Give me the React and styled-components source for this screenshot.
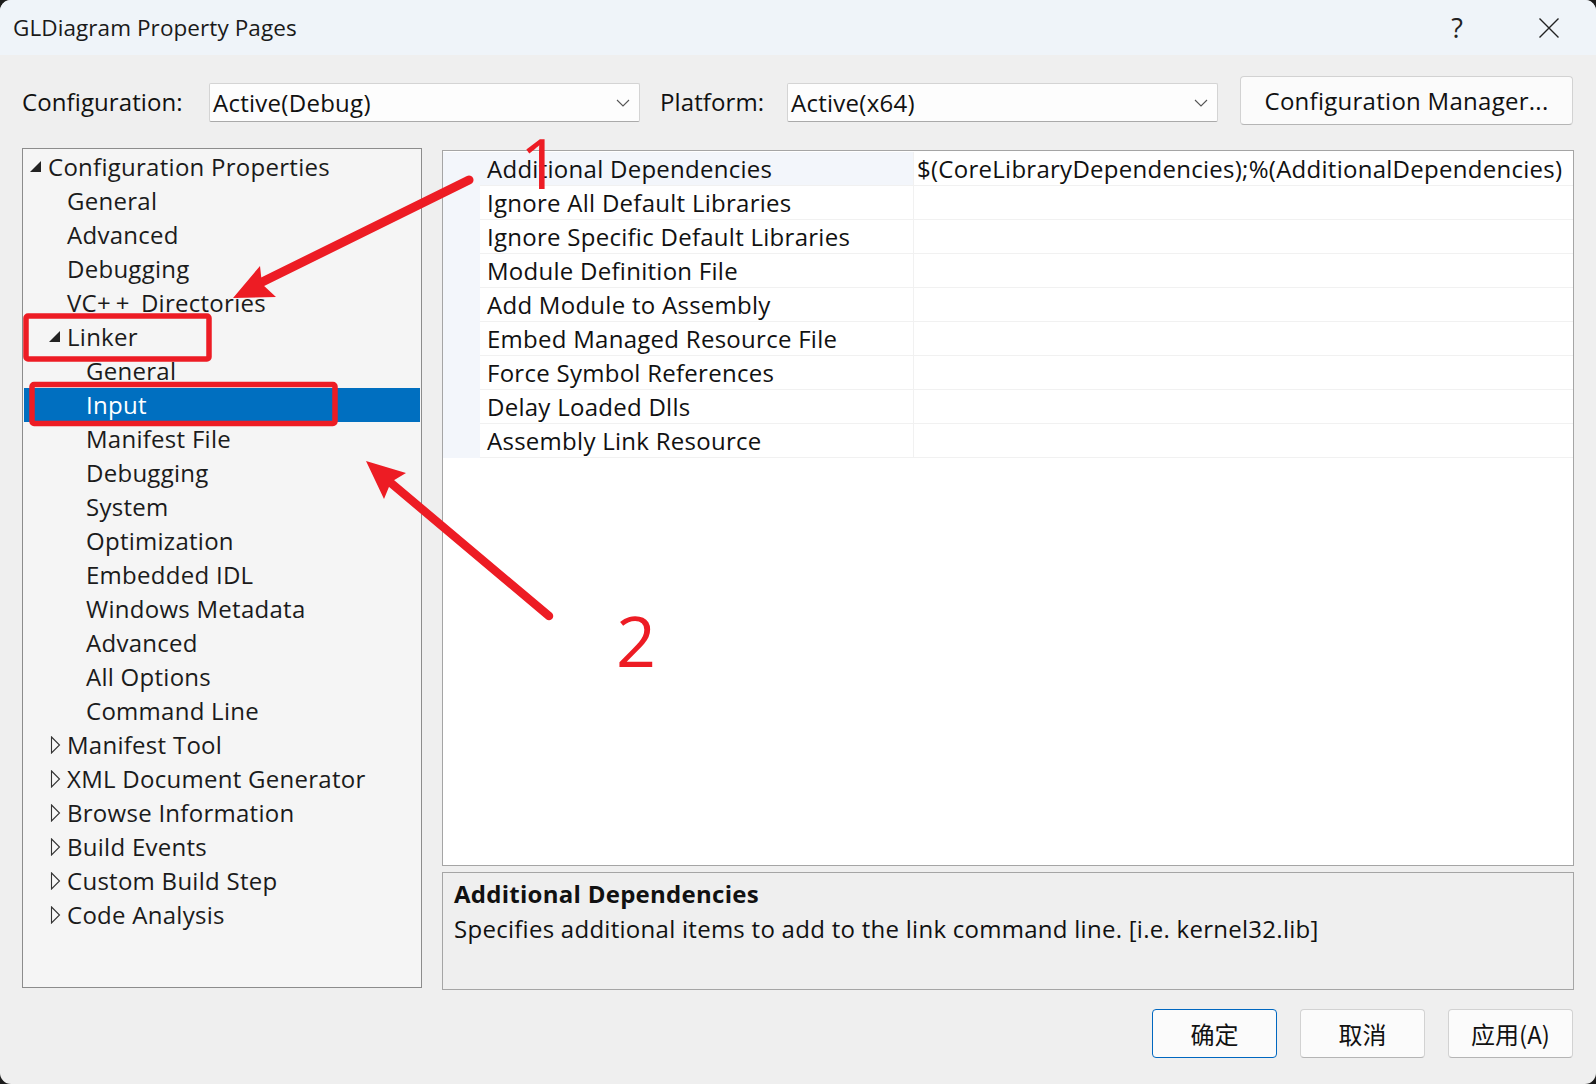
import React from "react";
import styled, { createGlobalStyle } from "styled-components";

const UI = `"Open Sans", "Noto Sans", sans-serif`;
const Global = createGlobalStyle`
  html, body { margin: 0; padding: 0; background: #1c1c1c; }
  * { box-sizing: border-box; }
`;
const Screen = styled.div`
  position: relative; width: 1596px; height: 1084px; overflow: hidden;
  background: #efefef; border-radius: 11px;
  font-family: ${UI}; font-size: 24px; letter-spacing: 0.27px; color: #111;
`;
const TitleBar = styled.div`
  height: 55px; background: #eff4f9; display: flex; align-items: center; padding: 0 1px 0 13px;
`;
const Title = styled.div`flex: 1; font-size: 22.5px; letter-spacing: 0.08px; color: #1a1a1a;`;
const TitleBtn = styled.button`
  border: 0; background: none; padding: 0; width: 92px; height: 55px; display: flex; align-items: center; justify-content: center;
  font: 27px ${UI}; color: #222;
`;
const Toolbar = styled.div`
  margin-top: 21px; height: 49px; padding: 0 23px 0 22px; display: flex; align-items: flex-start;
`;
const Label = styled.div`
  line-height: 52px; font-size: 24px; letter-spacing: 0.1px; flex: none; width: ${p => p.$w}px; padding-left: ${p => p.$pl || 0}px;
`;
const Select = styled.div`
  margin-top: 7px; margin-right: ${p => p.$mr || 0}px; height: 39px; width: ${p => p.$w}px; background: #fdfdfd; flex: none;
  border: 1px solid #d4d4d4; border-bottom-color: #aaa; border-radius: 2px;
  display: flex; align-items: center; padding: 0 9px 0 3px; line-height: 37px;
`;
const SelectText = styled.span`flex: 1;`;
const Btn = styled.div`
  height: 49px; width: ${p => p.$w || 125}px; background: #fbfbfb; flex: none;
  border: 1px solid ${p => (p.$primary ? "#0067c0" : "#d2d2d2")};
  border-bottom-color: ${p => (p.$primary ? "#0067c0" : "#b5b5b5")};
  border-radius: 4px; display: flex; align-items: center; justify-content: center;
  color: #111;
`;
const Main = styled.div`
  margin-top: 23px; padding: 0 22px 0 22px; display: grid; grid-template-columns: 400px 1132px; column-gap: 20px; align-items: start;
`;
const Tree = styled.div`
  height: 840px; background: #f5f5f5; border: 1px solid #8c8c8c; padding: 1px 1px 0;
`;
const TreeRow = styled.div`
  height: 34px; display: flex; align-items: center; padding-left: ${p => p.$indent}px;
  line-height: 34px; color: ${p => (p.$sel ? "#fff" : "#1b1b1b")};
  background: ${p => (p.$sel ? "#006fc0" : "transparent")};
`;
const TreeText = styled.span`white-space: pre;`;
const Plus = styled.span`letter-spacing: 5px;`;
const Tri = styled.svg`flex: none; width: 12px; height: 18px; margin-right: ${p => p.$mr}px;`;
const Right = styled.div`padding-top: 2px; display: flex; flex-direction: column; gap: 6px;`;
const Grid = styled.div`height: 716px; background: #fff; border: 1px solid #a5a5a5; padding-top: 1px;`;
const PropRow = styled.div`
  height: 34px; display: grid; grid-template-columns: 37px 434px 1fr;
`;
const Gutter = styled.div`background: #f3f6fb;`;
const PropName = styled.div`
  padding-left: 7px; line-height: 33px; border-bottom: 1px solid #f1f1f1; border-right: 1px solid #f1f1f1;
  background: ${p => (p.$sel ? "#f3f6fb" : "#fff")}; color: #111;
`;
const PropValue = styled.div`padding-left: 3px; line-height: 33px; border-bottom: 1px solid #f1f1f1; white-space: nowrap; color: #111;`;
const Desc = styled.div`height: 118px; border: 1px solid #a5a5a5; background: #efefef; padding: 3px 0 0 11px; line-height: 35px;`;
const DescTitle = styled.div`font-weight: 700;`;
const Footer = styled.div`
  margin-top: 19px; padding-right: 23px; display: flex; justify-content: flex-end; gap: 23px; font-family: "Noto Sans CJK SC", ${UI}; letter-spacing: 0;
`;
const Overlay = styled.svg`position: absolute; left: 0; top: 0; width: 1596px; height: 1084px; pointer-events: none;`;
const Mark = styled.div`
  position: absolute; left: ${p => p.$x}px; top: ${p => p.$y}px; color: #ed1c24; font: 70px/70px ${UI}; letter-spacing: 0;
`;

const FilledTri = ({ mr = 0 }) => (
  <Tri $mr={mr} viewBox="0 0 12 18"><path d="M11 3 V14 H0 Z" fill="#222" /></Tri>
);
const OpenTri = ({ mr = 0 }) => (
  <Tri $mr={mr} viewBox="0 0 12 18"><path d="M1.5 1 L9.5 9 L1.5 17 Z" fill="#f8f8f8" stroke="#333" strokeWidth="1.1" /></Tri>
);
const Chevron = () => (
  <svg width="14" height="10" viewBox="0 0 14 10"><path d="M1 2 L7 8 L13 2" fill="none" stroke="#555" strokeWidth="1.1" /></svg>
);

const tree = [
  ["Configuration Properties", "root"], ["General", 1], ["Advanced", 1], ["Debugging", 1],
  [<TreeText>VC<Plus>++</Plus> Directories</TreeText>, 1],
  ["Linker", "open"], ["General", 2], ["Input", 2, true], ["Manifest File", 2], ["Debugging", 2], ["System", 2],
  ["Optimization", 2], ["Embedded IDL", 2], ["Windows Metadata", 2], ["Advanced", 2], ["All Options", 2], ["Command Line", 2],
  ["Manifest Tool", "closed"], ["XML Document Generator", "closed"], ["Browse Information", "closed"], ["Build Events", "closed"],
  ["Custom Build Step", "closed"], ["Code Analysis", "closed"],
];
const props = ["Additional Dependencies", "Ignore All Default Libraries", "Ignore Specific Default Libraries", "Module Definition File",
  "Add Module to Assembly", "Embed Managed Resource File", "Force Symbol References", "Delay Loaded Dlls", "Assembly Link Resource"];

const renderTree = ([t, k, sel], i) => {
  if (k === "root") return <TreeRow key={i} $indent={6}><FilledTri mr={6} />{t}</TreeRow>;
  if (k === "open") return <TreeRow key={i} $indent={25}><FilledTri mr={6} />{t}</TreeRow>;
  if (k === "closed") return <TreeRow key={i} $indent={26}><OpenTri mr={5} />{t}</TreeRow>;
  return <TreeRow key={i} $sel={sel} $indent={k === 1 ? 43 : 62}>{t}</TreeRow>;
};

export default function App() {
  return (
    <Screen>
      <Global />
      <TitleBar>
        <Title>GLDiagram Property Pages</Title>
        <TitleBtn>?</TitleBtn>
        <TitleBtn>
          <svg width="20" height="20" viewBox="0 0 20 20"><path d="M0.5 0.5 L19.5 19.5 M19.5 0.5 L0.5 19.5" stroke="#222" strokeWidth="1.4" /></svg>
        </TitleBtn>
      </TitleBar>
      <Toolbar>
        <Label $w={187}>Configuration:</Label>
        <Select $w={431}><SelectText>Active(Debug)</SelectText><Chevron /></Select>
        <Label $w={147} $pl={20}>Platform:</Label>
        <Select $w={431} $mr={22}><SelectText>Active(x64)</SelectText><Chevron /></Select>
        <Btn $w={333}>Configuration Manager...</Btn>
      </Toolbar>
      <Main>
        <Tree>{tree.map(renderTree)}</Tree>
        <Right>
          <Grid>
            {props.map((p, i) => (
              <PropRow key={p}>
                <Gutter />
                <PropName $sel={i === 0}>{p}</PropName>
                <PropValue>{i === 0 ? "$(CoreLibraryDependencies);%(AdditionalDependencies)" : ""}</PropValue>
              </PropRow>
            ))}
          </Grid>
          <Desc>
            <DescTitle>Additional Dependencies</DescTitle>
            <div>Specifies additional items to add to the link command line. [i.e. kernel32.lib]</div>
          </Desc>
        </Right>
      </Main>
      <Footer>
        <Btn $primary>确定</Btn>
        <Btn>取消</Btn>
        <Btn>应用(A)</Btn>
      </Footer>
      <Overlay viewBox="0 0 1596 1084">
        <rect x="26" y="316" width="183" height="43" rx="2" fill="none" stroke="#ed1c24" strokeWidth="5.5" />
        <rect x="32" y="384.5" width="303" height="39" rx="2" fill="none" stroke="#ed1c24" strokeWidth="5.5" />
        <path d="M469 180 L250 288" stroke="#ed1c24" strokeWidth="9" strokeLinecap="round" fill="none" />
        <path d="M233 298 L260 266 L262 284 L276 297 Z" fill="#ed1c24" />
        <path d="M549 616 L385 478" stroke="#ed1c24" strokeWidth="8.5" strokeLinecap="round" fill="none" />
        <path d="M366 461 L406 473 L391 482 L384 499 Z" fill="#ed1c24" />
      </Overlay>
      <Mark $x={520} $y={127}>1</Mark>
      <Mark $x={616} $y={605}>2</Mark>
    </Screen>
  );
}
